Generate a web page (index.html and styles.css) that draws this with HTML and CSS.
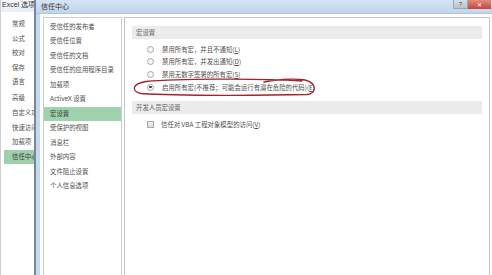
FILE: index.html
```html
<!DOCTYPE html>
<html lang="zh-CN">
<head>
<meta charset="utf-8">
<title>信任中心</title>
<link rel="stylesheet" href="styles.css">
</head>
<body>
<div class="excel">
  <div class="excel-title">Excel 选项</div>
  <ul class="excel-nav">
    <li>常规</li>
    <li>公式</li>
    <li>校对</li>
    <li>保存</li>
    <li class="sep">语言</li>
    <li>高级</li>
    <li>自定义功能区</li>
    <li>快速访问工具栏</li>
    <li>加载项</li>
    <li class="active">信任中心</li>
  </ul>
</div>
<div class="dialog">
  <div class="titlebar">
    <span class="title">信任中心</span>
    <span class="tb-help">?</span>
    <span class="tb-close">✕</span>
  </div>
  <div class="body">
    <ul class="list">
      <li>受信任的发布者</li>
      <li>受信任位置</li>
      <li>受信任的文档</li>
      <li>受信任的应用程序目录</li>
      <li>加载项</li>
      <li>ActiveX 设置</li>
      <li class="active">宏设置</li>
      <li>受保护的视图</li>
      <li>消息栏</li>
      <li>外部内容</li>
      <li>文件阻止设置</li>
      <li>个人信息选项</li>
    </ul>
    <div class="panel">
      <div class="band">宏设置</div>
      <div class="options">
        <div class="opt"><span class="radio"></span>禁用所有宏，并且不通知(<u>L</u>)</div>
        <div class="opt"><span class="radio"></span>禁用所有宏，并发出通知(<u>D</u>)</div>
        <div class="opt"><span class="radio"></span>禁用无数字签署的所有宏(<u>S</u>)</div>
        <div class="opt"><span class="radio checked"></span>启用所有宏(不推荐；可能会运行有潜在危险的代码)(<u>E</u>)</div>
      </div>
      <div class="band band-dev">开发人员宏设置</div>
      <div class="opt check-row"><span class="checkbox"></span>信任对 VBA 工程对象模型的访问(<u>V</u>)</div>
    </div>
  </div>
</div>
<svg class="mark" width="492" height="275" viewBox="0 0 492 275" aria-hidden="true">
  <path d="M302 81 C255 78 175 79 146 81.5 C133 83.5 130 91 141 93.5 C180 96 265 95.5 307 94.5 C317 93.5 317 83 305 80 C293 78 273 80 264 82" fill="none" stroke="#a3222c" stroke-width="1.3" stroke-linecap="round"/>
</svg>
</body>
</html>
```

FILE: styles.css
```css
* { box-sizing: border-box; }
html, body { margin: 0; padding: 0; }
body {
  width: 492px;
  height: 275px;
  overflow: hidden;
  display: flex;
  background: #ffffff;
  font-family: "Noto Sans CJK SC", "Noto Sans", sans-serif;
  font-size: 6.4px;
  color: #505050;
  position: relative;
}
ul { list-style: none; margin: 0; padding: 0; }

.excel {
  width: 34px;
  flex: none;
  display: flex;
  flex-direction: column;
  border-left: 1px solid #cfcfcf;
  background: #ffffff;
  overflow: hidden;
}
.excel-title {
  height: 12px;
  padding-left: 1px;
  font-family: "Liberation Sans", "Noto Sans CJK SC", sans-serif;
  font-size: 7px;
  line-height: 10px;
  color: #333;
  white-space: nowrap;
  overflow: hidden;
  background: linear-gradient(#f4f7fb, #e8eef6);
}
.excel-nav {
  padding-top: 5px;
  margin-left: 3px;
}
.excel-nav li {
  height: 14.6px;
  line-height: 14.6px;
  padding-left: 8px;
  white-space: nowrap;
  overflow: hidden;
}
.excel-nav li.sep { margin-bottom: 1.5px; }
.excel-nav li.active { background: #9fcfac; color: #3d3d3d; }

.dialog {
  flex: 1;
  display: flex;
  flex-direction: column;
  border-left: 2px solid #76879c;
  background: #c7d9ee;
}
.titlebar {
  height: 14px;
  flex: none;
  display: flex;
  align-items: flex-start;
  background: linear-gradient(#d6e4f5, #c0d5ec);
  border-bottom: 1px solid #b3c5da;
}
.title {
  padding-left: 5px;
  font-size: 7px;
  line-height: 12px;
  color: #333;
}
.tb-help {
  margin-left: auto;
  width: 15px;
  height: 9px;
  font-family: "Liberation Sans", sans-serif;
  font-size: 6px;
  line-height: 9px;
  text-align: center;
  color: #555;
  background: linear-gradient(#d6dde6, #b9c4d1);
  border: 1px solid #9aa6b5;
  border-top: none;
}
.tb-close {
  width: 23px;
  height: 9px;
  margin-right: 1px;
  font-family: "DejaVu Sans", sans-serif;
  font-size: 6px;
  line-height: 9px;
  text-align: center;
  color: #fff;
  background: linear-gradient(#e08c7f, #c7443a);
}
.body {
  flex: 1;
  display: flex;
  gap: 2px;
  margin-left: 4px;
  padding: 3px 2px 0 3px;
  background: #ffffff;
}
.list {
  width: 79px;
  flex: none;
  border: 1px solid #cdcdcd;
  border-bottom: none;
  padding-top: 1.8px;
}
.list li {
  height: 14.5px;
  line-height: 14.5px;
  padding-left: 6px;
  white-space: nowrap;
}
.list li.active { background: #9fd2ad; color: #3d3d3d; }

.panel {
  flex: 1;
  border: 1px solid #c4c4c4;
  border-bottom: none;
  padding: 8px 7px 0 7px;
}
.band {
  height: 13px;
  line-height: 13px;
  padding-left: 4px;
  background: #ebebeb;
  color: #666;
}
.options { padding-top: 4px; }
.opt {
  height: 12.6px;
  display: flex;
  align-items: center;
  padding-left: 15px;
  white-space: nowrap;
}
.opt u { text-decoration: underline; }
.radio {
  width: 7px;
  height: 7px;
  margin-right: 8px;
  border-radius: 50%;
  border: 1px solid #a9a9a9;
  background: radial-gradient(circle, #ffffff 30%, #e4e4e4 100%);
  flex: none;
  position: relative;
}
.radio.checked::after {
  content: "";
  position: absolute;
  left: 1.3px;
  top: 1.3px;
  width: 2.4px;
  height: 2.4px;
  border-radius: 50%;
  background: #3b3b3b;
}
.band-dev { margin-top: 7.6px; }
.check-row { margin-top: 4.7px; }
.checkbox {
  width: 7px;
  height: 7px;
  margin-right: 7px;
  border: 1px solid #a9a9a9;
  background: linear-gradient(#f2f2f2, #dcdcdc);
  flex: none;
}
.mark {
  position: absolute;
  left: 0;
  top: 0;
  pointer-events: none;
}
```
